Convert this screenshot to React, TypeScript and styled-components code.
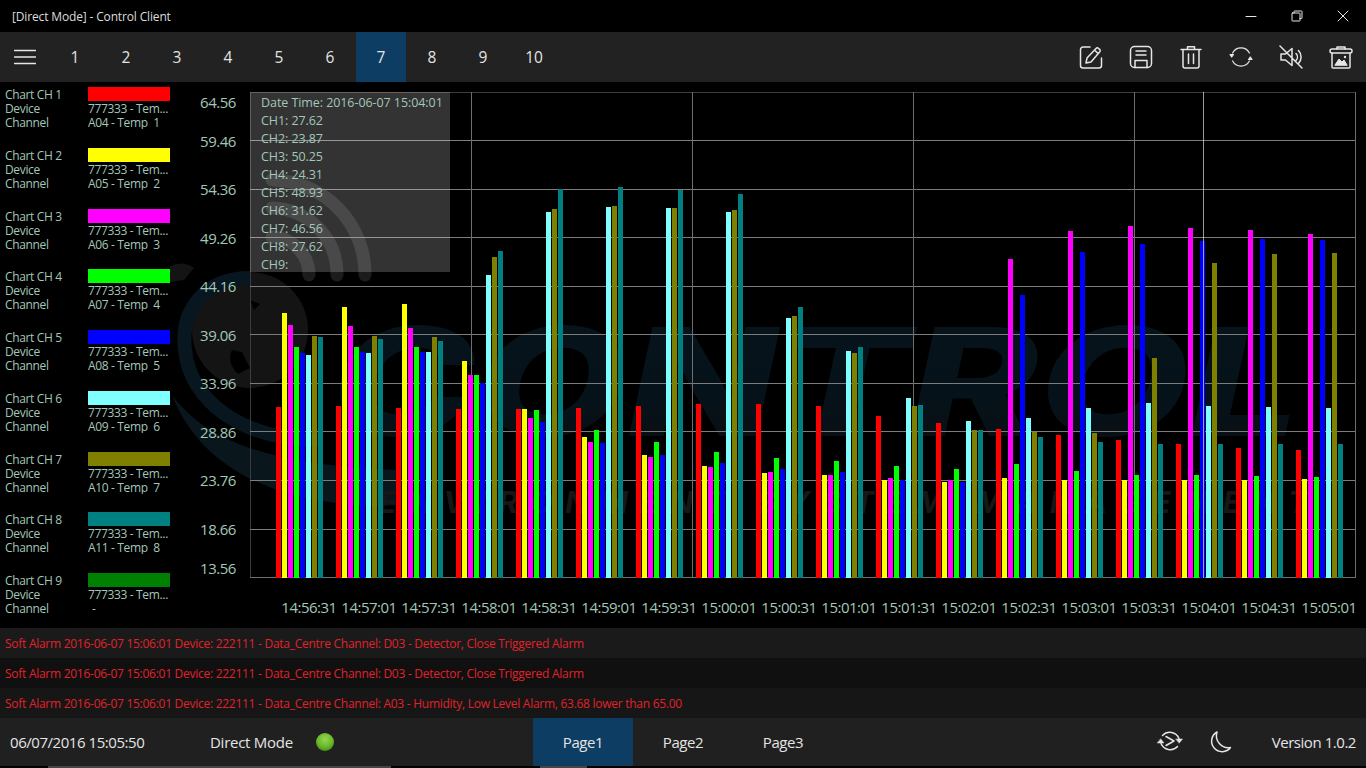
import React from 'react';
import styled, { createGlobalStyle } from 'styled-components';

const FONT = `"Open Sans", "Noto Sans", "Liberation Sans", sans-serif`;
const TEXT = '#a3c7b8';

const Global = createGlobalStyle`
  html, body { margin: 0; padding: 0; background: #000; }
  body { font-family: ${FONT}; overflow: hidden; }
  * { box-sizing: border-box; }
`;

const Page = styled.div`
  width: 1366px; height: 768px; display: flex; flex-direction: column; background: #000; overflow: hidden;
`;
const TitleBar = styled.header`
  height: 32px; flex: none; display: flex; align-items: center; padding-left: 12px; color: #dcdcdc;
  font-size: 12px; letter-spacing: -0.15px;
`;
const TitleText = styled.span`flex: 1;`;
const WinButton = styled.div`
  width: 46px; height: 32px; display: flex; align-items: center; justify-content: center;
`;
const Toolbar = styled.nav`
  height: 50px; flex: none; display: flex; background: #222222; color: #e4e4e4;
`;
const MenuButton = styled.div`
  width: 50px; display: flex; align-items: center; justify-content: center;
`;
const NumButton = styled.div<{ $active?: boolean }>`
  width: 50px; margin-right: 1px; display: flex; align-items: center; justify-content: center;
  font-size: 15.5px; background: ${p => (p.$active ? '#0e3d63' : 'transparent')};
`;
const ToolIcons = styled.div`margin-left: auto; display: flex;`;
const ToolIcon = styled.div`
  width: 50px; display: flex; align-items: center; justify-content: center;
`;
const Main = styled.main`
  height: 546px; flex: none; position: relative; display: flex;
`;
const Watermark = styled.svg`
  position: absolute; left: 0; top: 0; width: 1366px; height: 546px; z-index: 0;
`;
const Sidebar = styled.aside`
  width: 176px; flex: none; position: relative; z-index: 1; padding-top: 5px; color: ${TEXT};
  font-size: 12px; letter-spacing: -0.35px;
`;
const Channel = styled.div`
  height: 60.75px; display: grid; grid-template-columns: 83px 82px; grid-auto-rows: 14px;
  padding-left: 5px;
`;
const Swatch = styled.div<{ $color: string }>`
  height: 14px; background: ${p => p.$color};
`;
const Cell = styled.div`
  line-height: 16px; height: 14px; white-space: pre;
`;
const ChannelValue = styled(Cell)<{ $indent?: boolean }>`
  overflow: hidden; padding-left: ${p => (p.$indent ? '4px' : '0')};
`;
const ChartPane = styled.section`
  flex: 1; position: relative; z-index: 1;
`;
const ChartSvg = styled.svg`
  display: block; width: 1190px; height: 546px;
`;
const AxisY = styled.text`
  font-family: ${FONT}; font-size: 15px; fill: ${TEXT}; text-anchor: end; letter-spacing: -0.45px;
`;
const AxisX = styled.text`
  font-family: ${FONT}; font-size: 15px; fill: ${TEXT}; text-anchor: middle; letter-spacing: -0.5px;
`;
const Tip = styled.div`
  position: absolute; left: 74px; top: 10px; width: 200px; height: 180px; padding: 2px 0 0 11px;
  background: rgba(255, 255, 255, 0.2); color: ${TEXT}; font-size: 12.5px; line-height: 18px;
  letter-spacing: -0.07px; white-space: nowrap;
`;
const AlarmRow = styled.div<{ $bg: string }>`
  height: 30px; flex: none; display: flex; align-items: center; padding-left: 5px; background: ${p => p.$bg};
  color: #e0222a; font-size: 12px; letter-spacing: -0.27px; white-space: nowrap;
`;
const Footer = styled.footer`
  height: 48px; flex: none; display: flex; align-items: center; background: #202020; color: #e4e4e4; font-size: 15px;
  letter-spacing: -0.45px;
`;
const Clock = styled.div`width: 210px; padding-left: 10px;`;
const Mode = styled.div`width: 106px; letter-spacing: -0.27px;`;
const Led = styled.div`
  width: 18px; height: 18px; border-radius: 50%; margin-right: 199px;
  background: radial-gradient(circle at 50% 35%, #92d84e 0%, #6cb82a 50%, #2f7c0c 100%);
`;
const PageTab = styled.div<{ $active?: boolean }>`
  width: 100px; height: 48px; display: flex; align-items: center; justify-content: center;
  background: ${p => (p.$active ? '#0e3d63' : 'transparent')};
`;
const FooterRight = styled.div`
  margin-left: auto; display: flex; align-items: center; padding-right: 10px;
`;
const FooterIcon = styled.div`
  width: 50px; display: flex; align-items: center; justify-content: center;
`;
const Version = styled.div`margin-left: 27px;`;
const Strip = styled.div`height: 2px; flex: none; display: flex;`;
const Thumb = styled.div<{ $left: number; $width: number }>`
  margin-left: ${p => p.$left}px; width: ${p => p.$width}px; background: #454545;
`;

const COLORS = ['#ff0000', '#ffff00', '#ff00ff', '#00ff00', '#0000ff', '#80ffff', '#808000', '#008080'];
const TOPS = [
  [407, 313, 325, 347, 353, 355, 336, 337],
  [406, 307, 326, 347, 352, 353, 336, 339],
  [408, 304, 328, 347, 352, 352, 337, 341],
  [409, 361, 375, 375, 383, 275, 257, 251],
  [409, 409, 418, 410, 422, 212, 209, 189],
  [408, 437, 442, 430, 443, 207, 206, 187],
  [406, 455, 457, 442, 455, 208, 208, 190],
  [404, 466, 467, 452, 463, 212, 210, 194],
  [404, 473, 472, 458, 469, 318, 316, 307],
  [406, 475, 475, 461, 472, 351, 353, 347],
  [416, 480, 478, 466, 480, 398, 406, 405],
  [423, 482, 480, 469, 482, 421, 430, 430],
  [429, 478, 259, 464, 295, 418, 432, 437],
  [435, 480, 231, 471, 252, 408, 433, 442],
  [440, 480, 226, 475, 244, 403, 358, 444],
  [444, 480, 228, 475, 241, 406, 263, 444],
  [448, 480, 230, 476, 239, 407, 254, 444],
  [450, 479, 234, 477, 240, 408, 253, 444],
];
const TIMES = ['14:56:31','14:57:01','14:57:31','14:58:01','14:58:31','14:59:01','14:59:31','15:00:01','15:00:31','15:01:01','15:01:31','15:02:01','15:02:31','15:03:01','15:03:31','15:04:01','15:04:31','15:05:01'];
const GRID_Y = [140, 189, 237, 286, 334, 383, 431, 480, 529];
const GRID_X = [471, 692, 913, 1134, 1355];
const Y_LABELS: [string, number][] = [['64.56',108],['59.46',147],['54.36',195],['49.26',244],['44.16',292],['39.06',341],['33.96',389],['28.86',438],['23.76',486],['18.66',535],['13.56',574]];
const CHANNELS = [
  ['#ff0000','A04 - Temp  1'],['#ffff00','A05 - Temp  2'],['#ff00ff','A06 - Temp  3'],
  ['#00ff00','A07 - Temp  4'],['#0000ff','A08 - Temp  5'],['#80ffff','A09 - Temp  6'],
  ['#808000','A10 - Temp  7'],['#008080','A11 - Temp  8'],['#008000','-'],
];
const TIP_LINES = ['Date Time: 2016-06-07 15:04:01','CH1: 27.62','CH2: 23.87','CH3: 50.25','CH4: 24.31','CH5: 48.93','CH6: 31.62','CH7: 46.56','CH8: 27.62','CH9:'];

const Ico: React.FC<{ w?: number; h?: number; vb?: string; children: React.ReactNode; sw?: number }> = ({ w = 24, h = 24, vb = '0 0 24 24', children, sw = 1.5 }) => (
  <svg width={w} height={h} viewBox={vb} fill="none" stroke="#e6e6e6" strokeWidth={sw} strokeLinecap="round" strokeLinejoin="round">{children}</svg>
);

const WatermarkArt = () => (
  <Watermark viewBox="0 82 1366 546">
    <defs>
      <linearGradient id="wmText" x1="0" y1="0" x2="0" y2="1">
        <stop offset="0" stopColor="#06141b" />
        <stop offset="0.6" stopColor="#06121a" />
        <stop offset="1" stopColor="#0a0d0f" />
      </linearGradient>
    </defs>
    <circle cx="250" cy="330" r="58" fill="#141414" />
    <path d="M232 350q-6 12 6 24l12-6-8-16zM250 300l10 4-6 6z" fill="#000" />
    <path d="M170 266q14-6 24 2l-10 12-14 2z" fill="#141414" />
    <path d="M250 278C205 278 180 310 185 350C190 400 240 440 320 440" stroke="#08171f" strokeWidth="14" fill="none" />
    <path d="M172 395C205 440 270 466 400 470L400 505C300 510 205 480 172 395Z" fill="#09161c" />
    <g stroke="#1c1c1c" strokeWidth="13" fill="none" strokeLinecap="round">
      <path d="M272 237a38 38 0 0 1 37 38" />
      <path d="M272 208a66 66 0 0 1 65 67" />
      <path d="M272 180a94 94 0 0 1 93 95" />
    </g>
    <text x="330" y="436" fontFamily="Inter, sans-serif" fontWeight="800" fontStyle="italic" fontSize="150" textLength="970" lengthAdjust="spacingAndGlyphs" fill="url(#wmText)">CONTROL</text>
    <text x="378" y="513" fontFamily="Inter, sans-serif" fontWeight="700" fontStyle="italic" fontSize="30" textLength="930" fill="#171717">ENVIRONMENT SYSTEM MANAGEMENT</text>
  </Watermark>
);

const Chart = () => (
  <ChartSvg viewBox="176 82 1190 546" shapeRendering="crispEdges">
    <rect x="250" y="92" width="1106" height="1" fill="#3c3c3c" />
    <rect x="250" y="92" width="1" height="486" fill="#3c3c3c" />
    {GRID_Y.map(y => <rect key={y} x="250" y={y} width="1106" height="1" fill="#7c7c7c" />)}
    {GRID_X.map(x => <rect key={x} x={x} y="92" width="1" height="486" fill="#6e6e6e" />)}
    <rect x="250" y="577" width="1106" height="1" fill="#6e6e6e" />
    {TOPS.map((g, i) => g.map((t, j) => (
      <rect key={`${i}-${j}`} x={276 + 60 * i + 6 * j} y={t} width="5" height={578 - t} fill={COLORS[j]} />
    )))}
    <rect x="1203" y="92" width="1" height="486" fill="#ffffff" fillOpacity="0.6" />
    <g shapeRendering="auto">
      {Y_LABELS.map(([s, y]) => <AxisY key={s} x="236" y={y}>{s}</AxisY>)}
      {TIMES.map((s, i) => <AxisX key={s} x={309 + 60 * i} y="613">{s}</AxisX>)}
    </g>
  </ChartSvg>
);

export default function App() {
  return (
    <Page>
      <Global />
      <TitleBar>
        <TitleText>[Direct Mode] - Control Client</TitleText>
        <WinButton><Ico w={12} h={12} vb="0 0 12 12" sw={1}><path d="M1 6.5h10" /></Ico></WinButton>
        <WinButton><Ico w={12} h={12} vb="0 0 12 12" sw={1}><path d="M3 3V1.5a.5.5 0 0 1 .5-.5h7a.5.5 0 0 1 .5.5v6.5a.5.5 0 0 1-.5.5H9" /><rect x="1" y="3" width="8" height="8" rx=".5" /></Ico></WinButton>
        <WinButton><Ico w={12} h={12} vb="0 0 12 12" sw={1}><path d="M1 1l10 10M11 1L1 11" /></Ico></WinButton>
      </TitleBar>
      <Toolbar>
        <MenuButton>
          <Ico w={22} h={16} vb="0 0 22 16" sw={1.4}><path d="M.5 1.5h21M.5 8h21M.5 14.5h21" /></Ico>
        </MenuButton>
        {[1,2,3,4,5,6,7,8,9,10].map(n => <NumButton key={n} $active={n === 7}>{n}</NumButton>)}
        <ToolIcons>
          <ToolIcon><Ico><path d="M11 2H4a2.5 2.5 0 0 0-2.5 2.5v16A2.5 2.5 0 0 0 4 23h16a2.5 2.5 0 0 0 2.5-2.5V13" /><path d="M7 18l1-5L17 3.4a1.8 1.8 0 0 1 2.6 0l1 1a1.8 1.8 0 0 1 0 2.6L12 17zM15.5 5l3.5 3.5" /></Ico></ToolIcon>
          <ToolIcon><Ico><rect x="1.5" y="1.5" width="21" height="21" rx="4" /><path d="M7 6h10M7 10h10M6 22.5V15.5h12v7" /></Ico></ToolIcon>
          <ToolIcon><Ico><path d="M2 4.5h20M8.5 4V1.8h7V4M4 5v16a2 2 0 0 0 2 2h12a2 2 0 0 0 2-2V5M9.5 9v9.5M14.5 9v9.5" /></Ico></ToolIcon>
          <ToolIcon><Ico sw={1.2}><path d="M3.6 8A9.5 9.5 0 0 1 20.4 8M20.4 16A9.5 9.5 0 0 1 3.6 16" /><path d="M1 9.5h3.5L2.7 12zM19.5 14.5H23L21.3 12z" fill="#e6e6e6" /></Ico></ToolIcon>
          <ToolIcon><Ico><path d="M2 9h4.5L13 3.5v17L6.5 15H2zM17 8.5a5 5 0 0 1 0 7M19.5 5.5a9.5 9.5 0 0 1 0 13M1 1l22 22" /></Ico></ToolIcon>
          <ToolIcon><Ico><rect x="1" y="4" width="22" height="4" rx="2" /><path d="M8 4V2h8v2M3 8v14a1 1 0 0 0 1 1h16a1 1 0 0 0 1-1V8" /><path d="M6 20l4-6 3 3 2-2 3 5z" fill="#e6e6e6" strokeWidth="1" /><circle cx="16" cy="12" r="1.2" fill="#e6e6e6" strokeWidth="0" /></Ico></ToolIcon>
        </ToolIcons>
      </Toolbar>
      <Main>
        <WatermarkArt />
        <Sidebar>
          {CHANNELS.map(([color, ch], i) => (
            <Channel key={color}>
              <Cell>Chart CH {i + 1}</Cell>
              <Swatch $color={color} />
              <Cell>Device</Cell>
              <Cell>777333 - Tem...</Cell>
              <Cell>Channel</Cell>
              <ChannelValue $indent={ch === '-'}>{ch}</ChannelValue>
            </Channel>
          ))}
        </Sidebar>
        <ChartPane>
          <Chart />
          <Tip>{TIP_LINES.map(l => <div key={l}>{l}</div>)}</Tip>
        </ChartPane>
      </Main>
      <AlarmRow $bg="#1a1a1a">Soft Alarm 2016-06-07 15:06:01 Device: 222111 - Data_Centre Channel: D03 - Detector, Close Triggered Alarm</AlarmRow>
      <AlarmRow $bg="#101010">Soft Alarm 2016-06-07 15:06:01 Device: 222111 - Data_Centre Channel: D03 - Detector, Close Triggered Alarm</AlarmRow>
      <AlarmRow $bg="#161616">Soft Alarm 2016-06-07 15:06:01 Device: 222111 - Data_Centre Channel: A03 - Humidity, Low Level Alarm, 63.68 lower than 65.00</AlarmRow>
      <Footer>
        <Clock>06/07/2016 15:05:50</Clock>
        <Mode>Direct Mode</Mode>
        <Led />
        <PageTab $active>Page1</PageTab>
        <PageTab>Page2</PageTab>
        <PageTab>Page3</PageTab>
        <FooterRight>
          <FooterIcon>
            <Ico w={26} h={24} vb="0 0 26 24" sw={1.5}>
              <path d="M5.5 5.5A10 10 0 0 1 22 8.5M20.5 16.5A10 10 0 0 1 4 13.5" />
              <path d="M19 9h6.5l-3.2 4zM.5 13H7L3.8 9z" fill="#e6e6e6" strokeWidth="0.5" />
              <path d="M9 6.5L17 11l-8 4.5" />
            </Ico>
          </FooterIcon>
          <FooterIcon>
            <Ico><path d="M9 2A10.5 10.5 0 1 0 22.5 17.5A12 12 0 0 1 9 2Z" /></Ico>
          </FooterIcon>
          <Version>Version 1.0.2</Version>
        </FooterRight>
      </Footer>
      <Strip>
        <Thumb $left={48} $width={343} />
        <Thumb $left={149} $width={47} />
      </Strip>
    </Page>
  );
}
